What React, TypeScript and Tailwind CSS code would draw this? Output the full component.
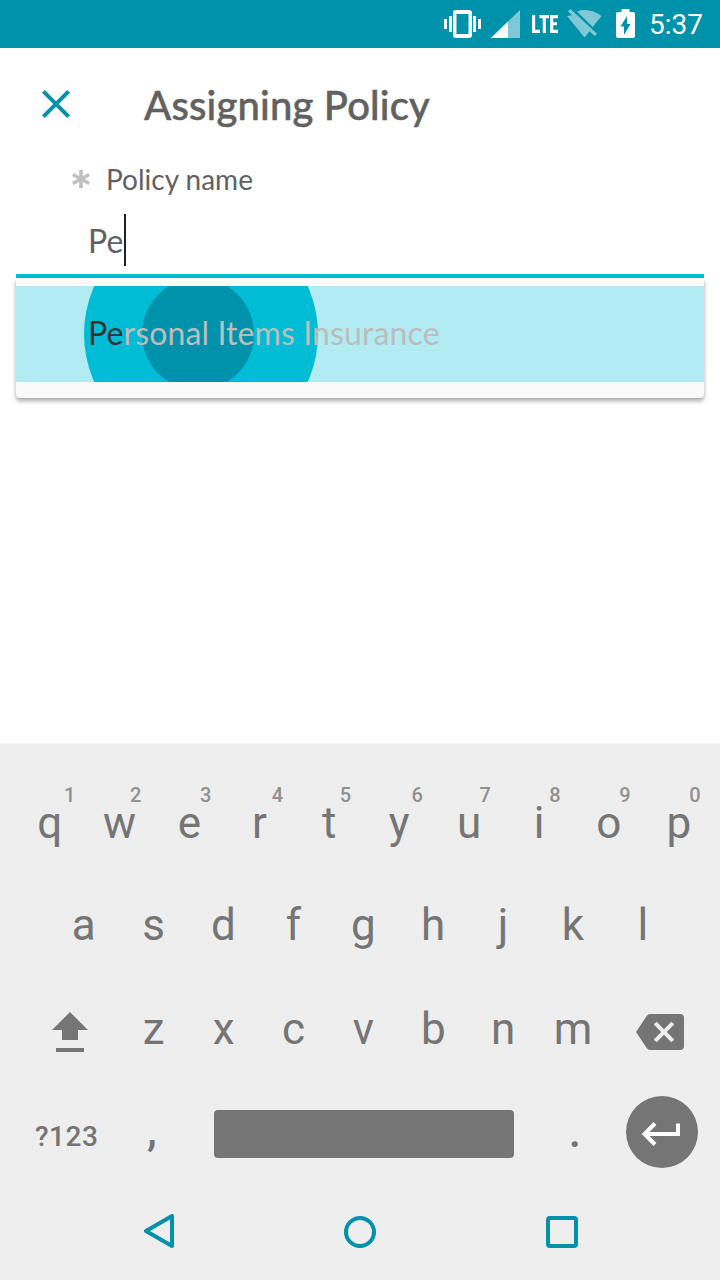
import React from "react";

const topRow: { letter: string; hint: string; place: string }[] = [
  { letter: "q", hint: "1", place: "left-[45px]" },
  { letter: "w", hint: "2", place: "left-[41px]" },
  { letter: "e", hint: "3", place: "left-[41px]" },
  { letter: "r", hint: "4", place: "left-[43px]" },
  { letter: "t", hint: "5", place: "left-[41px]" },
  { letter: "y", hint: "6", place: "left-[43px]" },
  { letter: "u", hint: "7", place: "left-[41px]" },
  { letter: "i", hint: "8", place: "left-[41px]" },
  { letter: "o", hint: "9", place: "left-[41px]" },
  { letter: "p", hint: "0", place: "left-[41px]" },
];
const middleRow = ["a", "s", "d", "f", "g", "h", "j", "k", "l"];
const bottomRow = ["z", "x", "c", "v", "b", "n", "m"];

function StatusBar() {
  return (
    <header className="flex h-12 items-center bg-[#0091ab] pl-[444px] font-[Roboto,sans-serif] text-white">
      <svg className="shrink-0" width="37" height="30" viewBox="0 0 37 30" fill="white">
        <path d="M0 10h3v10H0zM5 7h3v16H5zM29 7h3v16h-3zM34 10h3v10h-3z" />
        <path fillRule="evenodd" d="M12 1h13q3 0 3 3v22q0 3-3 3H12q-3 0-3-3V4q0-3 3-3zm.5 4v20h12V5z" />
      </svg>
      <svg className="ml-2.5 shrink-0" width="29" height="28" viewBox="0 0 29 28">
        <path d="M29 0V28H0z" fill="#80c8d5" />
        <path d="M17 11.600V28H0z" fill="white" />
      </svg>
      <svg className="ml-3 shrink-0" width="26" height="18" viewBox="0 0 26 18" fill="none" stroke="white" strokeWidth="3.100">
        <path d="M1.600 0v16.400H8M7.500 1.600H17M12.300 1.600V18M26 1.600h-6.300v14.800H26M19.500 8.800h5.500" />
      </svg>
      <svg className="ml-[9px] shrink-0" width="36" height="32" viewBox="0 0 36 32" fill="#80c8d5">
        <path d="M10 3.500C18 .5 27 2.500 34.500 8l-8.800 11z" />
        <path d="M3.500 1 1 3.500l4 3.700-5 .8 17.500 21.500 5-6.200 5.200 4.800 2.300-2.300z" />
      </svg>
      <svg className="ml-[13px] shrink-0" width="19" height="30" viewBox="0 0 19 30">
        <path fill="white" fillRule="evenodd" d="M5.500 0h8v3H17q2 0 2 2v22q0 2-2 2H2q-2 0-2-2V5q0-2 2-2h3.500zM11 7 4.500 17.500H8V26l6.500-11H11z" />
      </svg>
      <span className="mt-0.5 ml-[14px] text-[28px] leading-8">5:37</span>
    </header>
  );
}

function Key({ label }: { label: string }) {
  return <span className="w-[69.9px] text-center text-[44px] leading-[44px]">{label}</span>;
}

function Keyboard() {
  return (
    <section className="flex h-[537px] flex-col border-t border-[#f5f5f5] bg-[#eeeeee] pt-7 font-[Roboto,sans-serif] text-[#757575]">
      <div className="flex h-[102px] items-center pl-[14.8px]">
        {topRow.map((k) => (
          <div key={k.letter} className="relative flex">
            <Key label={k.letter} />
            <span className={`absolute -top-4 w-5 text-center text-xl leading-5 font-medium text-[#919191] ${k.place}`}>{k.hint}</span>
          </div>
        ))}
      </div>
      <div className="flex h-[102px] items-center pl-[48.800px]">
        {middleRow.map((k) => <Key key={k} label={k} />)}
      </div>
      <div className="flex h-[106px] items-center pl-[52px]">
        <svg className="mt-1.5 mr-[30.8px]" width="36" height="40" viewBox="0 0 36 40" fill="#757575">
          <path d="M18 0 36 18H26V28H10V18H0zM4 36H32v4H4z" />
        </svg>
        {bottomRow.map((k) => <Key key={k} label={k} />)}
        <svg className="ml-[27.9px] mt-1.5" width="48" height="36" viewBox="0 0 48 36">
          <path fill="#757575" d="M14 0H44q4 0 4 4V32q0 4-4 4H14q-2 0-3.300-2L0 18 10.700 2Q12 0 14 0z" />
          <path d="m19.200 9.200 17.600 17.600m0-17.600L19.200 26.800" stroke="#eee" strokeWidth="4" />
        </svg>
      </div>
      <div className="flex h-[100px] items-center pl-[35px]">
        <span className="mt-2.5 w-[82px] text-[28px] leading-8 font-medium tracking-[0.5px]">?123</span>
        <span className="-mt-1 flex w-[70px] font-medium"><Key label="," /></span>
        <div className="mt-1 ml-[27px] h-12 w-[300px] rounded-[4px] bg-[#757575]" />
        <span className="-mt-px ml-[26px] flex w-[70px] font-medium"><Key label="." /></span>
        <div className="ml-4 flex h-[72px] w-[72px] items-center justify-center rounded-full bg-[#757575]">
          <svg className="mt-[4px] mr-[5px]" width="40" height="24" viewBox="0 0 40 24" fill="none" stroke="white" strokeWidth="4">
            <path d="M15 1.500 4.500 12 15 22.500M4.500 12H38V1.500" />
          </svg>
        </div>
      </div>
      <nav className="flex h-[98px] items-center pl-[144px]">
        <svg width="30" height="34" viewBox="0 0 30 34" fill="none" stroke="#0091ab" strokeWidth="4" strokeLinejoin="round">
          <path d="M28 2V32L2 17z" />
        </svg>
        <div className="mt-0.5 ml-[170px] h-8 w-8 rounded-full border-4 border-[#0091ab]" />
        <div className="mt-0.5 ml-[170px] h-8 w-8 rounded-[4px] border-4 border-[#0091ab]" />
      </nav>
    </section>
  );
}

export default function App() {
  return (
    <div className="flex h-[1280px] w-[720px] flex-col overflow-hidden bg-white font-[Lato,sans-serif] text-[#616161]">
      <StatusBar />
      <main className="flex flex-1 flex-col">
        <div className="flex h-[114px] pt-8 pl-[42px]">
          <svg className="mt-2.5" width="28" height="28" viewBox="0 0 28 28" stroke="#0091ab" strokeWidth="4">
            <path d="m1.400 1.400 25.200 25.200m0-25.200L1.400 26.600" />
          </svg>
          <h1 className="mt-px ml-[74px] text-[40px] leading-[48px] font-medium tracking-[0.17px] [-webkit-text-stroke:0.5px_#616161]">Assigning Policy</h1>
        </div>
        <label className="flex h-[34px] pl-[72px] text-[28px] leading-[34px]">
          <svg className="mt-2" width="18" height="18" viewBox="0 0 18 18" stroke="#c0c0c0" strokeWidth="3.600">
            <path d="M9 0v18M.8 4.500l16.400 9M17.200 4.500l-16.400 9" />
          </svg>
          <span className="ml-4">Policy name</span>
        </label>
        <div className="mx-4 mt-[18px] flex h-16 border-b-4 border-[#00bcd4] pl-[72px] text-[32px] leading-[38px] tracking-[0.12px]">
          <span className="mt-2 w-9">Pe</span>
          <span className="h-[52px] w-0.5 bg-[#212121]" />
        </div>
        <div className="mx-4 h-[120px] rounded-b-[4px] bg-[#fafafa] pt-2 shadow-[0_3px_4px_rgba(0,0,0,0.35)]">
          <div className="relative flex h-24 items-center overflow-hidden bg-[#b2ebf2] pb-[3px] pl-[72px] text-[32px] leading-[38px] tracking-[0.12px]">
            <div className="absolute top-[-69px] left-[68px] h-[234px] w-[234px] rounded-full bg-[#00bcd4]" />
            <div className="absolute -top-2 left-[126px] h-28 w-28 rounded-full bg-[#0091ab]" />
            <span className="relative text-[#bdbdbd]"><span className="text-[#333333]">Pe</span>rsonal Items Insurance</span>
          </div>
        </div>
      </main>
      <Keyboard />
    </div>
  );
}
